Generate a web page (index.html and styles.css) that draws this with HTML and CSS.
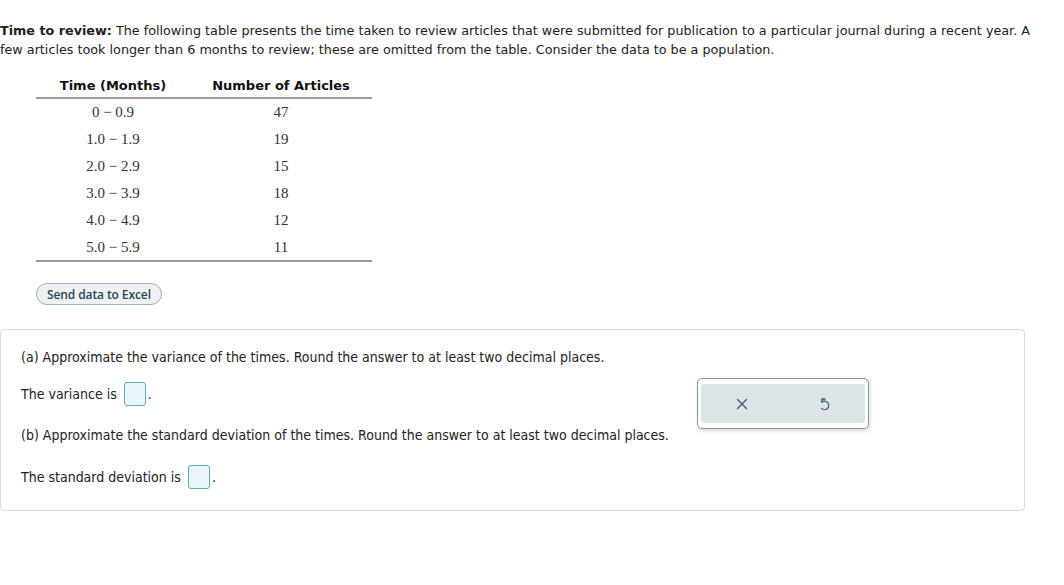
FILE: index.html
```html
<!DOCTYPE html>
<html>
<head>
<meta charset="utf-8">
<link rel="stylesheet" href="styles.css">
</head>
<body>
<p class="intro"><b>Time to review:</b> The following table presents the time taken to review articles that were submitted for publication to a particular journal during a recent year. A few articles took longer than 6 months to review; these are omitted from the table. Consider the data to be a population.</p>
<table class="data">
  <thead>
    <tr><th>Time (Months)</th><th>Number of Articles</th></tr>
  </thead>
  <tbody>
    <tr><td>0 − 0.9</td><td>47</td></tr>
    <tr><td>1.0 − 1.9</td><td>19</td></tr>
    <tr><td>2.0 − 2.9</td><td>15</td></tr>
    <tr><td>3.0 − 3.9</td><td>18</td></tr>
    <tr><td>4.0 − 4.9</td><td>12</td></tr>
    <tr><td>5.0 − 5.9</td><td>11</td></tr>
  </tbody>
</table>
<div class="btnrow"><button class="excel">Send data to Excel</button></div>
<div class="qbox">
  <div class="qleft">
    <p class="q">(a) Approximate the variance of the times. Round the answer to at least two decimal places.</p>
    <p class="ans">The variance is <span class="inp"></span>.</p>
    <p class="q qb">(b) Approximate the standard deviation of the times. Round the answer to at least two decimal places.</p>
    <p class="ans">The standard deviation is <span class="inp"></span>.</p>
  </div>
  <div class="actions">
    <div class="actions-inner">
      <svg class="ico" width="12" height="12" viewBox="0 0 12 12"><path d="M1.5 1.5L10.5 10.5M10.5 1.5L1.5 10.5" stroke="#3d5a6b" stroke-width="1.4" fill="none" stroke-linecap="round"/></svg>
      <svg class="ico" width="14" height="16" viewBox="0 0 14 16"><path d="M8 3L4.8 3L4.8 6.2A4.2 4.2 0 1 1 4.6 12.4" stroke="#3d5a6b" stroke-width="1.3" fill="none" stroke-linecap="round" stroke-linejoin="round"/></svg>
    </div>
  </div>
</div>
</body>
</html>
```
FILE: styles.css
```css
body {
  margin: 0;
  background: #fff;
  color: #222;
  font-family: "DejaVu Sans", Verdana, sans-serif;
  font-size: 13px;
}
.intro {
  margin: 0;
  padding-top: 21px;
  line-height: 19px;
  width: 1040px;
  font-size: 12.75px;
}
.data {
  margin: 16px 0 0 36px;
  border-collapse: collapse;
  width: 336px;
}
.data th {
  font-family: "DejaVu Sans", Verdana, sans-serif;
  font-size: 13px;
  font-weight: bold;
  color: #111;
  height: 19px;
  padding: 3px 0 0;
  border-bottom: 2px solid #9a9a9a;
  vertical-align: top;
}
.data th:first-child { width: 154px; }
.data td {
  font-family: "Liberation Serif", "Times New Roman", serif;
  font-size: 15px;
  color: #333;
  text-align: center;
  height: 27px;
  padding: 0;
}
.data tbody tr:last-child td { border-bottom: 2px solid #9a9a9a; height: 26px; }
.btnrow {
  margin: 21px 0 0 36px;
}
.excel {
  font-family: "Open Sans", "Liberation Sans", sans-serif;
  font-size: 12px;
  font-weight: 600;
  color: #2c4458;
  background: #eef2f4;
  border: 1px solid #9eb0b8;
  border-radius: 11px;
  height: 22px;
  padding: 0 10px;
  letter-spacing: -0.1px;
}
.qbox {
  margin-top: 24px;
  width: 1023px;
  height: 180px;
  border: 1px solid #d6dde0;
  border-radius: 4px;
  display: flex;
}
.qleft {
  width: 676px;
  padding-left: 20px;
  font-family: "DejaVu Sans Condensed", "DejaVu Sans", sans-serif;
  font-size: 14px;
  color: #222;
}
.q { margin: 18px 0 0; line-height: 18px; }
.ans {
  margin: 15px 0 0;
  display: flex;
  align-items: center;
  height: 26px;
}
.ans + .qb { margin-top: 19px; }
.qb + .ans { margin-top: 20px; }
.inp {
  display: inline-block;
  width: 20px;
  height: 22px;
  border: 1px solid #62aab8;
  border-radius: 3px;
  background: #eaf6fa;
  margin: 0 2px 0 7px;
}
.actions {
  margin-top: 48px;
  align-self: flex-start;
  width: 172px;
  height: 51px;
  box-sizing: border-box;
  border: 1px solid #7f98a3;
  border-radius: 5px;
  background: #fff;
  padding: 5px 3px;
  box-shadow: 1px 2px 4px rgba(0,0,0,0.15);
}
.actions-inner {
  background: #dde4e7;
  border-radius: 3px;
  height: 39px;
  display: flex;
  align-items: center;
  justify-content: space-around;
}
```
